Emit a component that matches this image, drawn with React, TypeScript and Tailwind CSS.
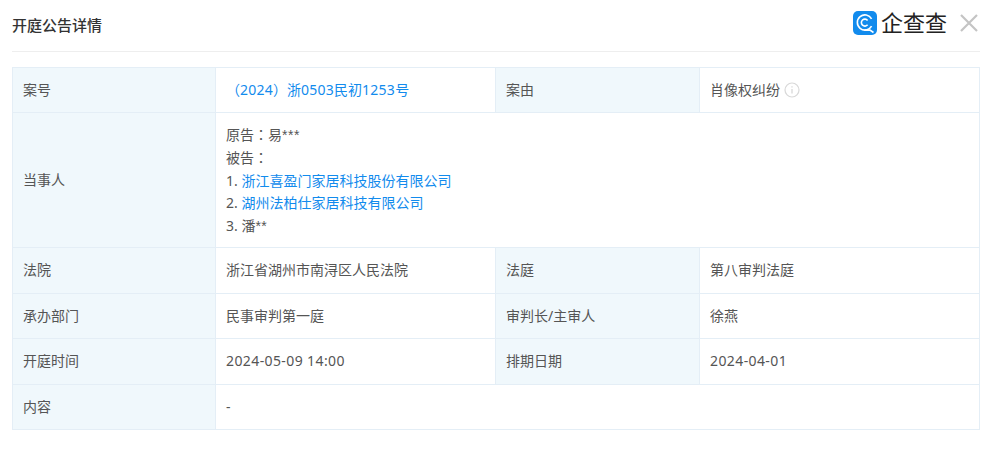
import React from "react";

const labelCls = "bg-[#f0f8fc] border border-[#e4eef6] px-[10px] align-middle font-normal text-left";
const valueCls = "border border-[#e4eef6] px-[10px] align-middle";
const linkCls = "text-[#128bed]";

// digits in the reference run a little wider than Noto Sans
function Num({ children }: { children: React.ReactNode }) {
  return <span className="tracking-[0.4px]">{children}</span>;
}

function CaseNum({ children }: { children: React.ReactNode }) {
  return <span className="tracking-[0.25px]">{children}</span>;
}

// full-width punctuation sits centred in the reference, the TC cut does that
function Punct({ children }: { children: React.ReactNode }) {
  return <span className="leading-none font-['Noto_Sans_CJK_TC',sans-serif]">{children}</span>;
}

function Stars({ children }: { children: React.ReactNode }) {
  return <span className="leading-none font-['Liberation_Sans',sans-serif] tracking-[0.5px]">{children}</span>;
}

export default function App() {
  return (
    <div className="w-[993px] h-[458px] bg-white px-[12px] overflow-hidden text-[14px] leading-[22.75px] text-[#555] font-['Noto_Sans','Noto_Sans_CJK_SC',sans-serif]">
      {/* header */}
      <div className="h-[52px] w-[968px] flex items-center justify-between border-b border-[#eeeeee]">
        <h1 className="text-[15px] font-medium text-[#333] -mt-[1px]">开庭公告详情</h1>
        <div className="flex items-center mr-[1px] -mt-[6px]">
          <svg width="24" height="24" viewBox="0 0 24 24" className="mr-[4px]">
            <rect width="24" height="24" rx="5" fill="#128bed" />
            <path d="M18.6 15.2a7.6 7.6 0 1 1 0-7.4" fill="none" stroke="#fff" strokeWidth="1.6" />
            <path d="M14.6 9.4a3.5 3.5 0 1 0 0 4.4" fill="none" stroke="#fff" strokeWidth="1.6" />
            <path d="M11.5 19.1h5.5l3.5 2.4" fill="none" stroke="#fff" strokeWidth="1.6" />
          </svg>
          <span className="text-[22px] leading-[24px] -mt-[2px] w-[66px] text-[#222] whitespace-nowrap">企查查</span>
          <svg width="20" height="20" viewBox="0 0 20 20" className="ml-[12px]">
            <path d="M2 2l16 16M18 2L2 18" stroke="#c4c4c4" strokeWidth="2.2" fill="none" />
          </svg>
        </div>
      </div>

      <table className="mt-[15px] w-[967px] table-fixed border-collapse">
        <colgroup>
          <col className="w-[203px]" />
          <col className="w-[280px]" />
          <col className="w-[204px]" />
          <col className="w-[280px]" />
        </colgroup>
        <tbody>
          <tr className="h-[45px]">
            <th className={labelCls}>案号</th>
            <td className={valueCls}>
              <span className={linkCls}><Punct>（</Punct><CaseNum>2024</CaseNum><Punct>）</Punct>浙<CaseNum>0503</CaseNum>民初<CaseNum>1253</CaseNum>号</span>
            </td>
            <th className={labelCls}>案由</th>
            <td className={valueCls}>
              <span className="inline-flex items-center">
                肖像权纠纷
                <svg width="16" height="16" viewBox="0 0 16 16" className="ml-[4px]">
                  <circle cx="8" cy="8" r="7" fill="none" stroke="#d8d8d8" strokeWidth="1.2" />
                  <path d="M8 7v4.5M8 4.2v1.4" stroke="#d8d8d8" strokeWidth="1.3" />
                </svg>
              </span>
            </td>
          </tr>
          <tr className="h-[135px]">
            <th className={labelCls}>当事人</th>
            <td className={`${valueCls} pt-[2px]`} colSpan={3}>
              <div>原告<Punct>：</Punct>易<Stars>***</Stars></div>
              <div>被告<Punct>：</Punct></div>
              <div>1. <span className={linkCls}>浙江喜盈门家居科技股份有限公司</span></div>
              <div>2. <span className={linkCls}>湖州法柏仕家居科技有限公司</span></div>
              <div>3. 潘<Stars>**</Stars></div>
            </td>
          </tr>
          <tr className="h-[46px]">
            <th className={labelCls}>法院</th>
            <td className={valueCls}>浙江省湖州市南浔区人民法院</td>
            <th className={labelCls}>法庭</th>
            <td className={valueCls}>第八审判法庭</td>
          </tr>
          <tr className="h-[45px]">
            <th className={labelCls}>承办部门</th>
            <td className={valueCls}>民事审判第一庭</td>
            <th className={labelCls}>审判长/主审人</th>
            <td className={valueCls}>徐燕</td>
          </tr>
          <tr className="h-[46px]">
            <th className={labelCls}>开庭时间</th>
            <td className={valueCls}><Num>2024-05-09 14:00</Num></td>
            <th className={labelCls}>排期日期</th>
            <td className={valueCls}><Num>2024-04-01</Num></td>
          </tr>
          <tr className="h-[45px]">
            <th className={labelCls}>内容</th>
            <td className={valueCls} colSpan={3}>-</td>
          </tr>
        </tbody>
      </table>
    </div>
  );
}
